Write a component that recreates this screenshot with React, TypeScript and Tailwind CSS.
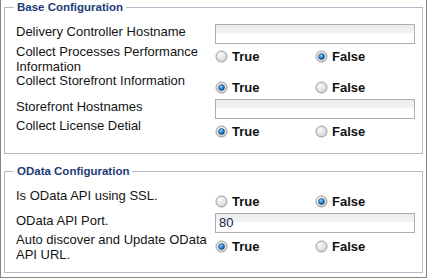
import React from 'react';

const font = { fontFamily: '"Liberation Sans", Arial, sans-serif' };

const Radio: React.FC<{ checked?: boolean }> = ({ checked }) => (
  <svg width="13" height="13" viewBox="0 0 13 13" className="shrink-0">
    <defs>
      <radialGradient id="rOff" cx="40%" cy="35%" r="70%">
        <stop offset="0%" stopColor="#fbfbfb" />
        <stop offset="100%" stopColor="#cfcfcf" />
      </radialGradient>
      <radialGradient id="rOn" cx="40%" cy="35%" r="70%">
        <stop offset="0%" stopColor="#8fd0ff" />
        <stop offset="60%" stopColor="#1e7bc6" />
        <stop offset="100%" stopColor="#0b3f78" />
      </radialGradient>
    </defs>
    <circle cx="6.5" cy="6.5" r="5.5" fill="url(#rOff)" stroke="#9a9a9a" strokeWidth="1" />
    {checked && <circle cx="6.5" cy="6.5" r="3" fill="url(#rOn)" stroke="#2a4d73" strokeWidth="0.6" />}
  </svg>
);

const TrueFalse: React.FC<{ value: boolean }> = ({ value }) => (
  <div className="flex items-center text-[13px] font-bold leading-[15px] text-[#111]">
    <label className="flex w-[100px] items-center gap-[4px]">
      <Radio checked={value} />
      <span>True</span>
    </label>
    <label className="flex items-center gap-[4px]">
      <Radio checked={!value} />
      <span>False</span>
    </label>
  </div>
);

const TextBox: React.FC<{ value?: string }> = ({ value }) => (
  <div className="h-[20px] w-[200px] border border-[#a9afba] bg-[linear-gradient(to_bottom,#ebebeb,#f3f3f3_8px,#ffffff_9px)] pl-[3px] text-[13px] leading-[18px] text-[#0f1f4a]">
    {value}
  </div>
);

const Label: React.FC<{ children: React.ReactNode; className?: string }> = ({ children, className }) => (
  <div className={`w-[201px] shrink-0 pl-[2px] text-[13px] leading-[14.5px] text-[#141414] ${className ?? ''}`}>{children}</div>
);

const Legend: React.FC<{ children: React.ReactNode }> = ({ children }) => (
  <legend className="px-[3px] text-[11.5px] font-bold leading-[14px] text-[#1c3c78]">{children}</legend>
);

export default function App() {
  return (
    <div className="h-[278px] w-[427px] border-x border-b border-[#858585] bg-white" style={font}>
      <fieldset className="mx-[3px] h-[154px] border border-[#b7b9c9] pl-[9px] pr-[6px]">
        <Legend>Base Configuration</Legend>
        <div className="flex items-start">
          <Label className="mt-[10.5px]">Delivery Controller Hostname</Label>
          <div className="mt-[10px]"><TextBox /></div>
        </div>
        <div className="flex items-start">
          <Label className="mt-[1px]">Collect Processes Performance<br />Information</Label>
          <div className="mt-[5px]"><TrueFalse value={false} /></div>
        </div>
        <div className="flex h-[24px] items-start">
          <Label>Collect Storefront Information</Label>
          <div className="mt-[6px]"><TrueFalse value={true} /></div>
        </div>
        <div className="flex items-start">
          <Label className="mt-[1.5px]">Storefront Hostnames</Label>
          <div className="mt-[1px]"><TextBox /></div>
        </div>
        <div className="flex items-start">
          <Label>Collect License Detial</Label>
          <div className="mt-[4.5px]"><TrueFalse value={true} /></div>
        </div>
      </fieldset>

      <fieldset className="mx-[3px] mt-[10px] h-[109px] border border-[#b7b9c9] pl-[9px] pr-[6px]">
        <Legend>OData Configuration</Legend>
        <div className="flex h-[29px] items-start">
          <Label className="mt-[11px]">Is OData API using SSL.</Label>
          <div className="mt-[15.5px]"><TrueFalse value={false} /></div>
        </div>
        <div className="flex items-start">
          <Label className="mt-[7px]">OData API Port.</Label>
          <div className="mt-[6px]"><TextBox value="80" /></div>
        </div>
        <div className="flex items-start">
          <Label>Auto discover and Update OData<br />API URL.</Label>
          <div className="mt-[6px]"><TrueFalse value={true} /></div>
        </div>
      </fieldset>
    </div>
  );
}
